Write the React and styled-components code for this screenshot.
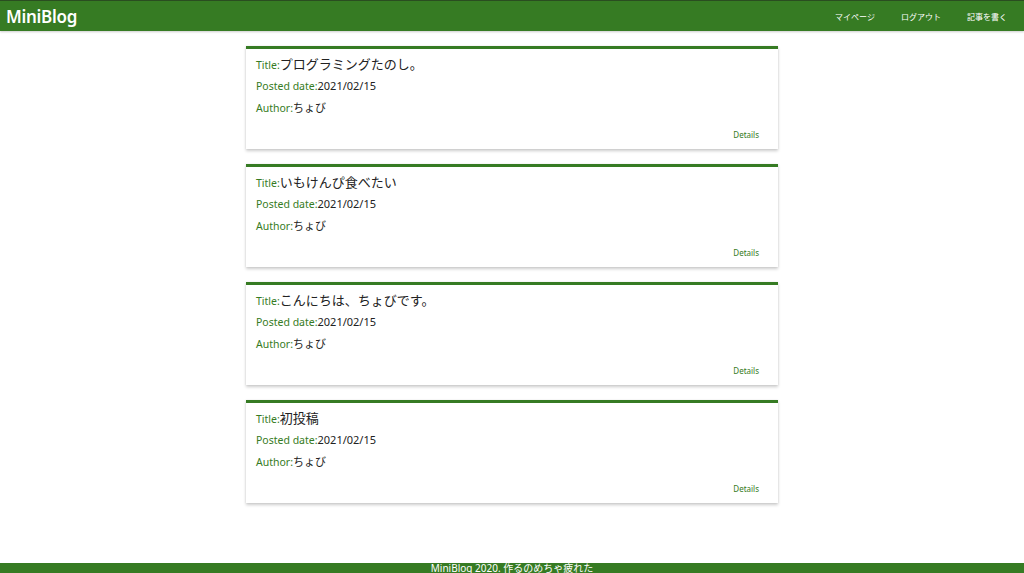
import React from "react";
import styled, { createGlobalStyle } from "styled-components";

const GREEN = "#367b23";

const posts = [
  { id: 1, title: "プログラミングたのし。", date: "2021/02/15", author: "ちょび" },
  { id: 2, title: "いもけんぴ食べたい", date: "2021/02/15", author: "ちょび" },
  { id: 3, title: "こんにちは、ちょびです。", date: "2021/02/15", author: "ちょび" },
  { id: 4, title: "初投稿", date: "2021/02/15", author: "ちょび" },
];

const GlobalStyle = createGlobalStyle`
  html, body {
    margin: 0;
    padding: 0;
    background: #fff;
    font-family: "Noto Sans", "Noto Sans CJK JP", sans-serif;
  }
  * { box-sizing: border-box; }
`;

const Page = styled.div`
  height: 573px;
  display: flex;
  flex-direction: column;
  overflow: hidden;
`;

const Header = styled.header`
  height: 31px;
  flex-shrink: 0;
  background: ${GREEN};
  border-top: 1px solid #2a4d20;
  display: flex;
  align-items: center;
  justify-content: space-between;
  box-shadow: 0 1px 2px rgba(0, 0, 0, 0.2);
`;

const Logo = styled.div`
  color: #fff;
  font-size: 17px;
  font-weight: 600;
  padding-left: 6px;
  letter-spacing: -0.3px;
`;

const Nav = styled.nav`
  display: flex;
  padding-right: 4px;
`;

const NavButton = styled.a`
  color: #fff;
  font-size: 8px;
  padding: 0 13px;
  width: 66px;
  text-align: center;
  text-decoration: none;
  white-space: nowrap;
`;

const Main = styled.main`
  flex: 1;
  padding-top: 15px;
  display: flex;
  flex-direction: column;
  align-items: center;
  gap: 15px;
`;

const Card = styled.article`
  width: 532px;
  background: #fff;
  border-top: 3px solid ${GREEN};
  box-shadow: 0 2px 3px rgba(0, 0, 0, 0.2), 0 0 2px rgba(0, 0, 0, 0.08);
  padding: 4px 10px 8px;
`;

const Row = styled.p`
  margin: 0;
  height: 22px;
  line-height: 22px;
  font-size: 11px;
  color: #222;
  white-space: nowrap;
`;

const Label = styled.span`
  color: ${GREEN};
  font-size: 10.5px;
`;

const Value = styled.span`
  font-size: ${(p) => (p.$big ? "13px" : "11px")};
  color: #222;
`;

const Actions = styled.div`
  margin-top: 8px;
  height: 14px;
  display: flex;
  align-items: center;
  justify-content: flex-end;
  padding-right: 9px;
`;

const DetailsLink = styled.a`
  color: ${GREEN};
  font-size: 8px;
  text-decoration: none;
`;

const Footer = styled.footer`
  height: 10px;
  flex-shrink: 0;
  background: ${GREEN};
  color: #fff;
  font-size: 10px;
  line-height: 10px;
  text-align: center;
  overflow: hidden;
`;

const PostCard = ({ post }) => (
  <Card>
    <Row>
      <Label>Title:</Label>
      <Value $big>{post.title}</Value>
    </Row>
    <Row>
      <Label>Posted date:</Label>
      <Value>{post.date}</Value>
    </Row>
    <Row>
      <Label>Author:</Label>
      <Value>{post.author}</Value>
    </Row>
    <Actions>
      <DetailsLink href="#">Details</DetailsLink>
    </Actions>
  </Card>
);

const App = () => (
  <Page>
    <GlobalStyle />
    <Header>
      <Logo>MiniBlog</Logo>
      <Nav>
        <NavButton href="#">マイページ</NavButton>
        <NavButton href="#">ログアウト</NavButton>
        <NavButton href="#">記事を書く</NavButton>
      </Nav>
    </Header>
    <Main>
      {posts.map((post) => (
        <PostCard key={post.id} post={post} />
      ))}
    </Main>
    <Footer>MiniBlog 2020. 作るのめちゃ疲れた</Footer>
  </Page>
);

export default App;
